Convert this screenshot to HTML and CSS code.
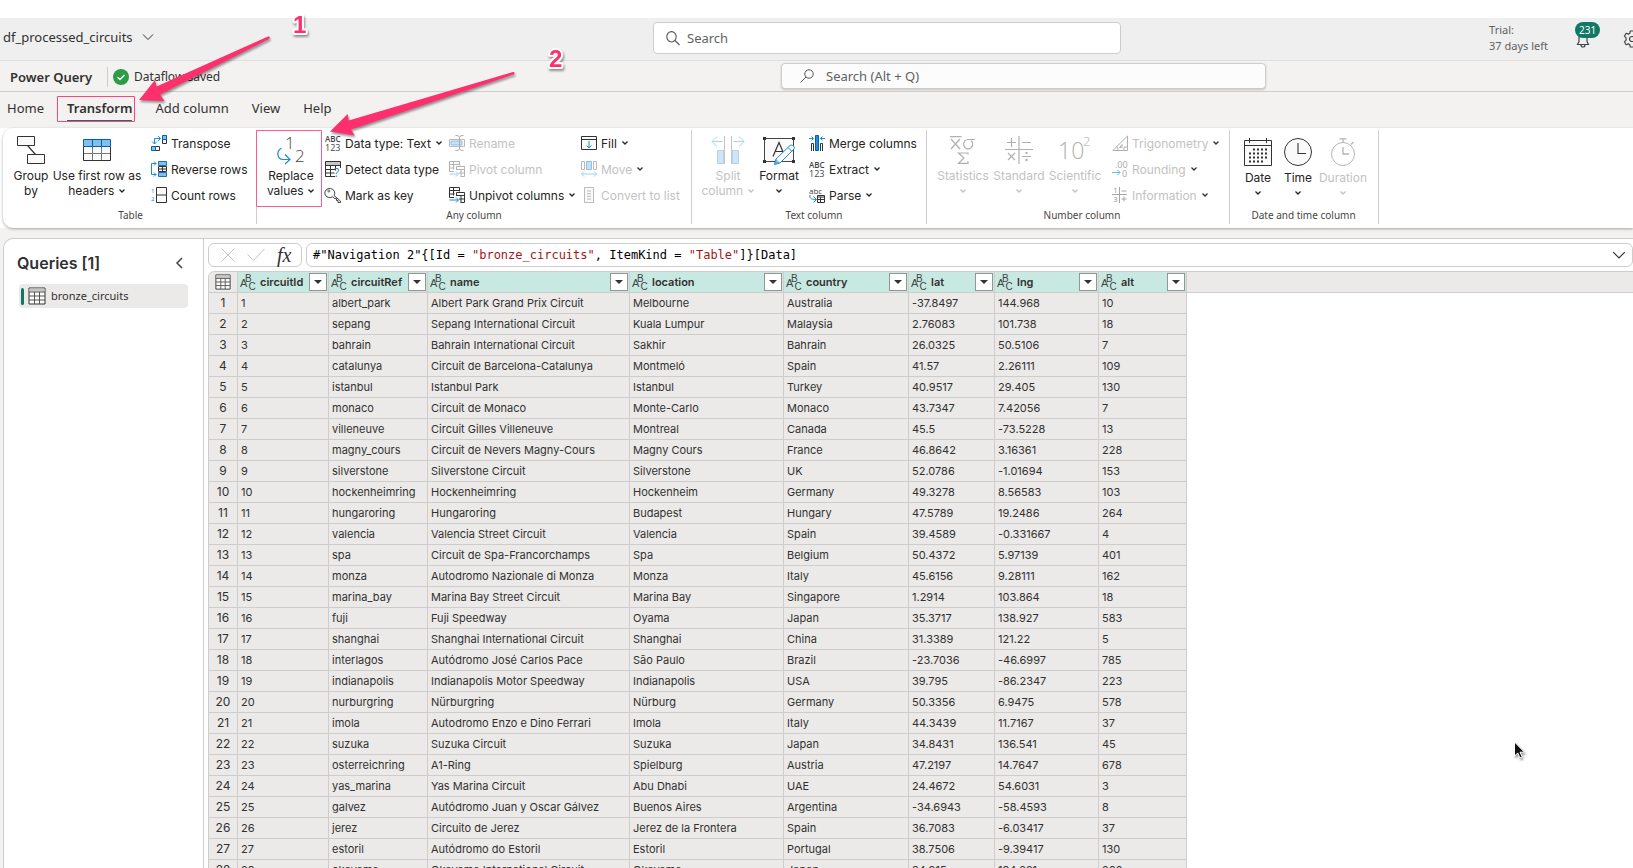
FILE: index.html
```html
<!DOCTYPE html>
<html lang="en">
<head>
<meta charset="utf-8">
<title>df_processed_circuits - Power Query</title>
<link rel="stylesheet" href="styles.css">
</head>
<body>
<svg class="sprite" aria-hidden="true">
  <symbol id="chev" viewBox="0 0 8 8"><path d="M1.500 2.500 4 5l2.500-2.500" fill="none" stroke="currentColor" stroke-width="1.300"/></symbol>
  <symbol id="chev-lg" viewBox="0 0 12 12"><path d="M1 3.500 6 8.500l5-5" fill="none" stroke="currentColor" stroke-width="1"/></symbol>
  <symbol id="abc" viewBox="0 0 16 16"><g fill="#444" font-family="Liberation Sans, sans-serif" font-weight="400"><text x="0" y="13" font-size="11">A</text><text x="5" y="8" font-size="10">B</text><text x="8.500" y="16" font-size="10">C</text></g></symbol>
  <symbol id="abc123" viewBox="0 0 16 16"><g fill="#444" font-family="Open Sans, sans-serif"><text x="0" y="6.500" font-size="8" font-weight="600">ABC</text><text x="0" y="16" font-size="9">123</text></g></symbol>
  <symbol id="grid" viewBox="0 0 18 18"><path d="M1 1h16v16H1z" fill="#fafafa" stroke="#333"/><path d="M1.500 1.500h15v3h-15z" fill="#c8c6c4"/><path d="M1 5h16M1 9h16M1 13h16M6.500 5v12M11.500 5v12" fill="none" stroke="#555"/></symbol>
</svg>

<div class="app">
  <header class="topbar">
    <button class="title" type="button">df_processed_circuits <svg class="i12"><use href="#chev-lg"/></svg></button>
    <label class="search search--global">
      <svg class="i14" viewBox="0 0 14 14"><g fill="none" stroke="#555" stroke-width="1.100"><ellipse cx="5.500" cy="5.800" rx="4.700" ry="5.200"/><path d="M9 9.500 13.500 14"/></g></svg>
      <input type="search" placeholder="Search" aria-label="Search">
    </label>
    <div class="account">
      <p class="trial">Trial:<br>37 days left</p>
      <button class="bell" type="button" aria-label="Notifications">
        <svg viewBox="0 0 16 20" width="16" height="20"><path d="M2.500 15.500h11l-1.500-3V7a4 4 0 0 0-8 0v5.500zM6 16a2 2 0 0 0 4 0" fill="none" stroke="#444" stroke-width="1.200"/></svg>
        <span class="badge">231</span>
      </button>
      <button class="gear" type="button" aria-label="Settings"><svg viewBox="0 0 18 18" width="18" height="18"><g fill="none" stroke="#444" stroke-width="1.200"><path d="M7.300 1h3.400l.5 2.300 1.500.8 2.200-.8 1.700 2.900-1.700 1.700v2.200l1.700 1.700-1.700 2.900-2.200-.8-1.500.8-.5 2.300H7.300l-.5-2.300-1.500-.8-2.200.8-1.700-2.900 1.700-1.700V7.900L1.400 6.200l1.700-2.900 2.200.8 1.500-.8z" stroke-linejoin="round"/><circle cx="9" cy="9" r="2.500"/></g></svg></button>
    </div>
  </header>

  <div class="subbar">
    <div class="status">
      <strong class="product">Power Query</strong>
      <svg class="i16" viewBox="0 0 16 16"><circle cx="8" cy="8" r="8" fill="#2e9b47"/><path d="M4.500 8.200 7 10.500l4.500-4.500" fill="none" stroke="#fff" stroke-width="1.300"/></svg>
      <span>Dataflow saved</span>
    </div>
    <label class="search search--commands">
      <svg class="i14" viewBox="0 0 14 14"><g fill="none" stroke="#555" stroke-width="1"><circle cx="9" cy="5" r="4.200"/><path d="M6 8 .5 13.500"/></g></svg>
      <input type="search" placeholder="Search (Alt + Q)" aria-label="Search commands">
    </label>
  </div>

  <nav class="tabs">
    <button type="button">Home</button>
    <button type="button" class="active">Transform</button>
    <button type="button">Add column</button>
    <button type="button">View</button>
    <button type="button">Help</button>
  </nav>

  <section class="ribbon">
    <div class="group group--table">
      <div class="tools">
        <button type="button" class="big w36">
          <svg viewBox="0 0 28 28"><g fill="#fafafa" stroke="#333"><path d="M10.500 9.500 18.500 18.500" stroke-width="1.200"/><path d="M.5.500h17v9H.5zM10.500 18.500h17v9h-17z"/></g></svg>
          <span>Group<br>by</span></button>
        <button type="button" class="big w96">
          <svg viewBox="0 0 28 28"><path d="M.5 3.500h27v21H.5z" fill="#fafafa"/><path d="M.5 3.500h27v7H.5z" fill="#83beec"/><path d="M.5 10.500h27M9.500 3.500v7M18.500 3.500v7" stroke="#0063b1" fill="none"/><path d="M1 17.500h26M9.500 11v13M18.500 11v13" stroke="#777" fill="none"/><path d="M.5 10.500v14h27v-14" fill="none" stroke="#333"/><path d="M.5 10.500v-7h27v7" fill="none" stroke="#0063b1"/></svg>
          <span>Use first row as<br>headers <svg class="i8"><use href="#chev"/></svg></span></button>
        <div class="stack">
          <button type="button"><svg viewBox="0 0 16 16"><g fill="#fafafa" stroke="#333"><path d="M11.500 4.500h4v4h-4zM4.500 11.500h4v4h-4z"/><path d="M11.500.5h4v4h-4zM.5 11.500h4v4h-4z" fill="#83beec" stroke="#0063b1"/></g><path d="M9.500 3.500H3.500V9M7 1l2.500 2.500L7 6M1 6.500 3.500 9 6 6.500" fill="none" stroke="#1e8bcd"/></svg>Transpose</button>
          <button type="button"><svg viewBox="0 0 16 16"><path d="M7.500 5.500h8v5h-8zM7.500 8h8M11.500 5.500v5" fill="#fafafa" stroke="#333"/><path d="M7.500.5h8v4h-8zM7.500 11.500h8v4h-8z" fill="#83beec" stroke="#1e6fb5"/><path d="M5 2.500H.5v11H5M3 .5l2 2-2 2M3 11.500l2 2-2 2" fill="none" stroke="#1e8bcd"/></svg>Reverse rows</button>
          <button type="button"><svg viewBox="0 0 16 16"><path d="M5.500.5h10v15h-10zM5.500 8h10" fill="#fafafa" stroke="#333"/><g fill="#1e8bcd" font-family="Open Sans, sans-serif" font-size="6"><text x="0" y="5.500">1</text><text x="0" y="14">2</text></g></svg>Count rows</button>
        </div>
      </div>
      <h2>Table</h2>
    </div>

    <div class="group group--any">
      <div class="tools">
        <button type="button" class="big w68">
          <svg viewBox="0 0 28 28"><g fill="#444" font-family="Open Sans, sans-serif" font-size="17" font-weight="300"><text x="8" y="13">1</text><text x="18" y="26">2</text></g><path d="M4.500 12C-1 15 0 23.500 6 23.500h6.500M8 18.500l5 5-5 4.500" fill="none" stroke="#1e8bcd" stroke-width="1.200"/></svg>
          <span>Replace<br>values <svg class="i8"><use href="#chev"/></svg></span></button>
        <div class="stack w124">
          <button type="button"><svg><use href="#abc123"/></svg>Data type: Text <svg class="i8"><use href="#chev"/></svg></button>
          <button type="button"><svg viewBox="0 0 16 16"><path d="M.5 1h15v4H.5z" fill="#c8c6c4"/><path d="M10 15.500H.5V.5h15V7M.5 4.500h15M.5 8.500H10M.5 12h9M5.500 4.500v11M10.500 4.500v5" fill="none" stroke="#333"/><text x="9" y="15.500" font-family="Open Sans, sans-serif" font-size="12" fill="#1e8bcd">?</text></svg>Detect data type</button>
          <button type="button"><svg viewBox="0 0 16 16"><path d="M9 8.500 15.500 14v1.500H13v-2h-1.500v-2H9.500L7.800 9.700A5 4.600 0 1 1 9 8.500z" fill="#fafafa" stroke="#444"/><circle cx="3.800" cy="4" r="1" fill="none" stroke="#444" stroke-width=".8"/></svg>Mark as key</button>
        </div>
        <div class="stack w132">
          <button type="button" disabled><svg viewBox="0 0 16 16"><path d="M.5 4.500h15v7H.5z" fill="#fafafa" stroke="#bbb"/><path d="M2 6h11v4H2z" fill="#c7e0f4" stroke="#8fc1e8"/><path d="M6.500.5c2 0 4 .5 4 2v11c0 1.500-2 2-4 2M14.500.5c-2 0-4 .5-4 2v11c0 1.500 2 2 4 2" fill="none" stroke="#aaa"/></svg>Rename</button>
          <button type="button" disabled><svg viewBox="0 0 16 16"><path d="M5 10.500H.5V.5h10v4M.5 3.500h10M.5 7h5M4.500.5v8M7.500 9V5.500h8v10h-4M7.500 8.500h8M12 8.500v7M10 12h5" fill="none" stroke="#b3b3b3"/><path d="M.5 13h9M7 10.500 9.500 13 7 15.500" fill="none" stroke="#9fd0f0"/></svg>Pivot column</button>
          <button type="button"><svg viewBox="0 0 16 16"><path d="M5 10.500H.5V.5h10v4M.5 3.500h10M.5 7h5M4.500.5v8M7.500 9V5.500h8v10h-4M7.500 8.500h8M12 8.500v7M10 12h5" fill="none" stroke="#333"/><path d="M.5 13h9M7 10.500 9.500 13 7 15.500" fill="none" stroke="#1e8bcd"/></svg>Unpivot columns <svg class="i8"><use href="#chev"/></svg></button>
        </div>
        <div class="stack">
          <button type="button"><svg viewBox="0 0 16 16"><path d="M.5 1.500h15v13H.5zM.5 4.500h15" fill="#fafafa" stroke="#333"/><path d="M8 6v7M5.500 10.500 8 13l2.500-2.500" fill="none" stroke="#1e8bcd"/></svg>Fill <svg class="i8"><use href="#chev"/></svg></button>
          <button type="button" disabled><svg viewBox="0 0 16 16"><path d="M.5.500h3v8h-3zM12.500.500h3v8h-3z" fill="none" stroke="#bbb"/><path d="M5.500.500h5v8h-5z" fill="#c7e0f4" stroke="#8fc1e8"/><path d="M.5 13h15M3 10.500.5 13 3 15.500M13 10.500 15.500 13 13 15.500" fill="none" stroke="#9fd0f0"/></svg>Move <svg class="i8 dark"><use href="#chev"/></svg></button>
          <button type="button" disabled><svg viewBox="0 0 16 16"><path d="M3.500.5h9v15h-9zM6 4h4M6 6.700h4M6 9.300h4M6 12h4" fill="#fafafa" stroke="#bbb"/></svg>Convert to list</button>
        </div>
      </div>
      <h2>Any column</h2>
    </div>

    <div class="group group--text">
      <div class="tools">
        <button type="button" class="big w52" disabled>
          <svg class="wide" viewBox="0 0 32 28"><path d="M12.500 0v28M19.500 0v28" stroke="#c4c4c4"/><path d="M5.500 14.500h6v13h-6zM20.500 14.500h6v13h-6z" fill="#cfe4f6" stroke="#b0d3ee"/><path d="M10.500 5.500H.5M5 .5l-5 5 5 5M21.500 5.500h10M27 .5l5 5-5 5" fill="none" stroke="#a5d3f0"/></svg>
          <span>Split<br>column <svg class="i8"><use href="#chev"/></svg></span></button>
        <button type="button" class="big w50">
          <svg class="wide" viewBox="0 0 32 28"><path d="M1.500 2.500h29v23h-29z" fill="#fafafa" stroke="#444"/><path d="M0 1h3v3H0zM29 1h3v3h-3zM0 24h3v3H0zM29 24h3v3h-3z" fill="#333"/><path d="M10 20.500 16 6.500l6 14M12 15.500h8" fill="none" stroke="#333" stroke-width="1.200"/><path d="M11.500 28.500 13 23 27 9.500c2-1.500 5.500 1.500 4 3.500L17 27z" fill="#fafafa" stroke="#1e8bcd"/><path d="M11.500 28.500 13 23l4 4z" fill="#1e8bcd" opacity=".6"/><path d="M25 11.500l4 4" stroke="#1e8bcd"/></svg>
          <span>Format<br><svg class="i8"><use href="#chev"/></svg></span></button>
        <div class="stack">
          <button type="button"><svg viewBox="0 0 16 16"><path d="M6.500.5h3v15h-3z" fill="#2b88d8" stroke="#0063b1"/><path d="M2.500 16V8.500h2V16M13.500 16V8.500h-2V16" fill="none" stroke="#333"/><path d="M0 3.500h4.500M2.500 1.500l2 2-2 2M16 3.500h-4.500M13.500 1.500l-2 2 2 2" fill="none" stroke="#1e8bcd"/></svg>Merge columns</button>
          <button type="button"><svg><use href="#abc123"/></svg>Extract <svg class="i8"><use href="#chev"/></svg></button>
          <button type="button"><svg viewBox="0 0 16 16"><text x="0" y="6.500" font-family="Open Sans, sans-serif" font-size="8" fill="#444">abc</text><path d="M1 8c-1 3 1 4.500 6 4.500M4.500 9.500l3 3-3 3" fill="none" stroke="#1e8bcd"/><path d="M8.500 8.500h7v7h-7zM8.500 10h7M9 12.500h7M11.500 10v5" fill="none" stroke="#333"/></svg>Parse <svg class="i8"><use href="#chev"/></svg></button>
        </div>
      </div>
      <h2>Text column</h2>
    </div>

    <div class="group group--number">
      <div class="tools">
        <button type="button" class="big w56" disabled>
          <svg viewBox="0 0 28 28"><g fill="none" stroke="#b0b0b0" stroke-width="1.200"><path d="M1 .6h11.500M2 3l9 10M11 3 2 13M26 3.500h-6.500a4.500 4.700 0 1 0 2.500 1M19 16.500v2M19 17H9.500l5.500 5-5.500 5.300H19v-2"/></g></svg>
          <span>Statistics<br><svg class="i8"><use href="#chev"/></svg></span></button>
        <button type="button" class="big w56" disabled>
          <svg viewBox="0 0 28 28"><g fill="none" stroke="#b0b0b0" stroke-width="1.200"><path d="M14 0v28M0 13.500h28M2 6.500h9M6.500 2v9M17 6.500h9M3 17l7 7M10 17l-7 7M17 20.500h9"/></g><circle cx="21.500" cy="17" r="1.200" fill="#b0b0b0"/><circle cx="21.500" cy="24" r="1.200" fill="#b0b0b0"/></svg>
          <span>Standard<br><svg class="i8"><use href="#chev"/></svg></span></button>
        <button type="button" class="big w56" disabled>
          <svg class="wide" viewBox="0 0 32 28"><g fill="#b0b0b0" font-family="Open Sans, sans-serif" font-weight="300"><text x="-1" y="23" font-size="23">10</text><text x="24" y="10" font-size="13">2</text></g></svg>
          <span>Scientific<br><svg class="i8"><use href="#chev"/></svg></span></button>
        <div class="stack">
          <button type="button" disabled><svg viewBox="0 0 16 16"><path d="M.8 15.500 15.500 1v14.500zM6 15c0-2-.5-3-2-3.500M15.500 12H12v3.500M7.500 12.500h2.500v-3z" fill="none" stroke="#b0b0b0"/></svg>Trigonometry <svg class="i8 dark"><use href="#chev"/></svg></button>
          <button type="button" disabled><svg viewBox="0 0 16 16"><g font-family="Open Sans, sans-serif" font-size="9" fill="#a6a6a6"><text x="3" y="7">.00</text><text x="10" y="16">0</text></g><path d="M0 11.500h8M5.500 9 8 11.500 5.500 14" fill="none" stroke="#6cb8ea"/></svg>Rounding <svg class="i8 dark"><use href="#chev"/></svg></button>
          <button type="button" disabled><svg viewBox="0 0 16 16"><path d="M7.500 0v16M0 7.500h15M9.500 4h5M9.500 12h5M12 9.500v5" fill="none" stroke="#a6a6a6"/><g font-family="Open Sans, sans-serif" font-size="7" fill="#888"><text x="1.500" y="6">1</text><text x="1.500" y="15">3</text></g></svg>Information <svg class="i8 dark"><use href="#chev"/></svg></button>
        </div>
      </div>
      <h2>Number column</h2>
    </div>

    <div class="group group--date">
      <div class="tools">
        <button type="button" class="big low w42">
          <svg viewBox="0 0 28 28"><path d="M.5 2.500h27v25H.5zM.5 7.500h27M5.500 0v5M22.500 0v5" fill="#fafafa" stroke="#333"/><path d="M9 11.500h14M5 15.500h18M5 19.500h18M5 23.500h14" stroke="#333" stroke-width="2" stroke-dasharray="2 2"/></svg>
          <span>Date<br><svg class="i8"><use href="#chev"/></svg></span></button>
        <button type="button" class="big low w38">
          <svg viewBox="0 0 28 28"><circle cx="14" cy="14" r="13.500" fill="#fafafa" stroke="#333"/><path d="M14 5v10.500h8" fill="none" stroke="#333" stroke-width="1.100"/></svg>
          <span>Time<br><svg class="i8"><use href="#chev"/></svg></span></button>
        <button type="button" class="big low w52" disabled>
          <svg viewBox="0 0 28 28"><g fill="none" stroke="#b5b5b5"><circle cx="14" cy="16" r="11.500"/><path d="M10.500.8h7M14 1v4M22 6.500 24.500 4M14 9v7h6" stroke-width="1.300"/></g></svg>
          <span>Duration<br><svg class="i8"><use href="#chev"/></svg></span></button>
      </div>
      <h2>Date and time column</h2>
    </div>
  </section>

  <div class="workspace">
    <aside class="queries">
      <div class="queries-head">
        <h1>Queries [1]</h1>
        <button type="button" aria-label="Collapse"><svg width="8" height="12" viewBox="0 0 8 12"><path d="M7 1 2 6l5 5" fill="none" stroke="#444" stroke-width="1.500"/></svg></button>
      </div>
      <button type="button" class="query"><svg width="18" height="18"><use href="#grid"/></svg>bronze_circuits</button>
    </aside>

    <main class="main">
      <div class="formula">
        <div class="fx">
          <svg width="14" height="14" viewBox="0 0 14 14"><path d="M.5.5l13 13M13.500.5l-13 13" stroke="#c2c2c2"/></svg>
          <svg width="18" height="14" viewBox="0 0 18 14"><path d="M.5 6.500 6.500 12.500 17.500 1" fill="none" stroke="#c2c2c2"/></svg>
          <em>fx</em>
        </div>
        <div class="expr">
          <code>#"Navigation 2"{[Id = <b>"bronze_circuits"</b>, ItemKind = <b>"Table"</b>]}[Data]</code>
          <button type="button" aria-label="Expand formula"><svg class="i14"><use href="#chev-lg"/></svg></button>
        </div>
      </div>

      <div class="sheet">
        <table>
          <colgroup><col class="c0"><col class="c1"><col class="c2"><col class="c3"><col class="c4"><col class="c5"><col class="c6"><col class="c7"><col class="c8"></colgroup>
          <thead>
            <tr>
              <td class="corner"><svg width="16" height="16"><use href="#grid"/></svg></td>
              <th scope="col"><div class="col"><svg class="i16"><use href="#abc"/></svg><span>circuitId</span><button type="button" aria-label="Filter circuitId"></button></div></th>
              <th scope="col"><div class="col"><svg class="i16"><use href="#abc"/></svg><span>circuitRef</span><button type="button" aria-label="Filter circuitRef"></button></div></th>
              <th scope="col"><div class="col"><svg class="i16"><use href="#abc"/></svg><span>name</span><button type="button" aria-label="Filter name"></button></div></th>
              <th scope="col"><div class="col"><svg class="i16"><use href="#abc"/></svg><span>location</span><button type="button" aria-label="Filter location"></button></div></th>
              <th scope="col"><div class="col"><svg class="i16"><use href="#abc"/></svg><span>country</span><button type="button" aria-label="Filter country"></button></div></th>
              <th scope="col"><div class="col"><svg class="i16"><use href="#abc"/></svg><span>lat</span><button type="button" aria-label="Filter lat"></button></div></th>
              <th scope="col"><div class="col"><svg class="i16"><use href="#abc"/></svg><span>lng</span><button type="button" aria-label="Filter lng"></button></div></th>
              <th scope="col"><div class="col"><svg class="i16"><use href="#abc"/></svg><span>alt</span><button type="button" aria-label="Filter alt"></button></div></th>
            </tr>
          </thead>
          <tbody>
            <tr><th>1<td>1<td>albert_park<td>Albert Park Grand Prix Circuit<td>Melbourne<td>Australia<td>-37.8497<td>144.968<td>10
            <tr><th>2<td>2<td>sepang<td>Sepang International Circuit<td>Kuala Lumpur<td>Malaysia<td>2.76083<td>101.738<td>18
            <tr><th>3<td>3<td>bahrain<td>Bahrain International Circuit<td>Sakhir<td>Bahrain<td>26.0325<td>50.5106<td>7
            <tr><th>4<td>4<td>catalunya<td>Circuit de Barcelona-Catalunya<td>Montmeló<td>Spain<td>41.57<td>2.26111<td>109
            <tr><th>5<td>5<td>istanbul<td>Istanbul Park<td>Istanbul<td>Turkey<td>40.9517<td>29.405<td>130
            <tr><th>6<td>6<td>monaco<td>Circuit de Monaco<td>Monte-Carlo<td>Monaco<td>43.7347<td>7.42056<td>7
            <tr><th>7<td>7<td>villeneuve<td>Circuit Gilles Villeneuve<td>Montreal<td>Canada<td>45.5<td>-73.5228<td>13
            <tr><th>8<td>8<td>magny_cours<td>Circuit de Nevers Magny-Cours<td>Magny Cours<td>France<td>46.8642<td>3.16361<td>228
            <tr><th>9<td>9<td>silverstone<td>Silverstone Circuit<td>Silverstone<td>UK<td>52.0786<td>-1.01694<td>153
            <tr><th>10<td>10<td>hockenheimring<td>Hockenheimring<td>Hockenheim<td>Germany<td>49.3278<td>8.56583<td>103
            <tr><th>11<td>11<td>hungaroring<td>Hungaroring<td>Budapest<td>Hungary<td>47.5789<td>19.2486<td>264
            <tr><th>12<td>12<td>valencia<td>Valencia Street Circuit<td>Valencia<td>Spain<td>39.4589<td>-0.331667<td>4
            <tr><th>13<td>13<td>spa<td>Circuit de Spa-Francorchamps<td>Spa<td>Belgium<td>50.4372<td>5.97139<td>401
            <tr><th>14<td>14<td>monza<td>Autodromo Nazionale di Monza<td>Monza<td>Italy<td>45.6156<td>9.28111<td>162
            <tr><th>15<td>15<td>marina_bay<td>Marina Bay Street Circuit<td>Marina Bay<td>Singapore<td>1.2914<td>103.864<td>18
            <tr><th>16<td>16<td>fuji<td>Fuji Speedway<td>Oyama<td>Japan<td>35.3717<td>138.927<td>583
            <tr><th>17<td>17<td>shanghai<td>Shanghai International Circuit<td>Shanghai<td>China<td>31.3389<td>121.22<td>5
            <tr><th>18<td>18<td>interlagos<td>Autódromo José Carlos Pace<td>São Paulo<td>Brazil<td>-23.7036<td>-46.6997<td>785
            <tr><th>19<td>19<td>indianapolis<td>Indianapolis Motor Speedway<td>Indianapolis<td>USA<td>39.795<td>-86.2347<td>223
            <tr><th>20<td>20<td>nurburgring<td>Nürburgring<td>Nürburg<td>Germany<td>50.3356<td>6.9475<td>578
            <tr><th>21<td>21<td>imola<td>Autodromo Enzo e Dino Ferrari<td>Imola<td>Italy<td>44.3439<td>11.7167<td>37
            <tr><th>22<td>22<td>suzuka<td>Suzuka Circuit<td>Suzuka<td>Japan<td>34.8431<td>136.541<td>45
            <tr><th>23<td>23<td>osterreichring<td>A1-Ring<td>Spielburg<td>Austria<td>47.2197<td>14.7647<td>678
            <tr><th>24<td>24<td>yas_marina<td>Yas Marina Circuit<td>Abu Dhabi<td>UAE<td>24.4672<td>54.6031<td>3
            <tr><th>25<td>25<td>galvez<td>Autódromo Juan y Oscar Gálvez<td>Buenos Aires<td>Argentina<td>-34.6943<td>-58.4593<td>8
            <tr><th>26<td>26<td>jerez<td>Circuito de Jerez<td>Jerez de la Frontera<td>Spain<td>36.7083<td>-6.03417<td>37
            <tr><th>27<td>27<td>estoril<td>Autódromo do Estoril<td>Estoril<td>Portugal<td>38.7506<td>-9.39417<td>130
            <tr><th>28<td>28<td>okayama<td>Okayama International Circuit<td>Okayama<td>Japan<td>34.915<td>134.221<td>266
          </tbody>
        </table>
        <div class="filler"></div>
      </div>
    </main>
  </div>
</div>

<svg class="notes" width="1633" height="868" viewBox="0 0 1633 868" aria-hidden="true">
  <path d="M57.500 96.500h77v25h-77z" fill="none" stroke="#f9487f"/>
  <path d="M256.500 130.500h65v76h-65z" fill="none" stroke="#fb5c8d"/>
  <g class="drop" fill="#ff2f6d">
    <path d="M139 100 155 80l1.500 6.500L268 36.500c2-.5 2.500 1.500 1 2.500L160 94.500l4.500 6.500z"/>
    <path d="M330 131.500 347.700 114l1 6.500L513 72c2 0 2 2 .5 2.500L351 129.500l3.700 6z"/>
    <g font-family="Liberation Sans, sans-serif" font-size="24" font-weight="700" stroke="#fff" stroke-width="4" stroke-linejoin="round" paint-order="stroke">
      <text x="293" y="33">1</text>
      <text x="549" y="67">2</text>
    </g>
  </g>
  <path class="drop" d="M1514.500 742v14l3.300-3 2.200 5 2.200-1-2.200-4.800h4.500z" fill="#111" stroke="#fff"/>
</svg>
</body>
</html>
```
FILE: styles.css
```css
* { box-sizing: border-box; }

:root {
  --ui: "Noto Sans", "Open Sans", sans-serif;
  --data: Inter, "Liberation Sans", sans-serif;
  --line: #cfcdcb;
  --chrome: #f3f2f1;
  --cell: #ebeae9;
  --accent: #117865;
}

body {
  margin: 0;
  background: #fff;
  color: #323130;
  font: 13px/16px var(--ui);
  overflow: hidden;
}

button {
  border: 0;
  padding: 0;
  margin: 0;
  background: none;
  color: inherit;
  font: inherit;
}

svg { flex: none; display: block; overflow: visible; }
.sprite { display: none; }
.i8 { width: 8px; height: 8px; }
.i12 { width: 12px; height: 12px; }
.i14 { width: 14px; height: 14px; }
.i16 { width: 16px; height: 16px; }

.app {
  display: flex;
  flex-direction: column;
  height: 100vh;
  padding-top: 18px;
  overflow: hidden;
}

/* Top bars */
.topbar,
.subbar {
  display: grid;
  align-items: center;
  flex: none;
}
.topbar {
  grid-template-columns: 653px minmax(0, 468px) 1fr;
  height: 43px;
  background: #efefef;
  border-bottom: 1px solid #dedede;
}
.subbar {
  grid-template-columns: 781px minmax(0, 485px) 1fr;
  height: 31px;
  background: var(--chrome);
  border-bottom: 1px solid var(--line);
  font-size: 12px;
}
.title {
  display: flex;
  align-items: center;
  gap: 9px;
  padding: 0 0 4px 3px;
}
.search {
  display: flex;
  align-items: center;
  border: 1px solid var(--line);
  border-radius: 4px;
  background: #fff;
}
.search input {
  flex: 1;
  border: 0;
  padding: 0;
  background: none;
  font: 13px/16px var(--ui);
}
.search input::placeholder { color: #616161; opacity: 1; }
.search--global { height: 32px; padding-left: 12px; gap: 7px; margin-bottom: 3px; }
.search--commands {
  height: 26px;
  padding-left: 18px;
  gap: 12px;
  background: #fcfcfc;
  box-shadow: 0 1px 2px #0003;
}
.account {
  display: flex;
  align-items: center;
  justify-content: flex-end;
  margin-right: -8px;
  color: #616161;
}
.trial { margin: 0 27px 3px 0; font-size: 11px; }
.bell { position: relative; margin-right: 32px; }
.badge {
  position: absolute;
  left: 0;
  top: -7px;
  padding: 0 4px;
  border-radius: 8px;
  background: var(--accent);
  color: #fff;
  font-size: 10px;
  line-height: 16px;
}
.status { display: flex; align-items: center; padding-top: 2px; }
.product {
  margin-right: 5px;
  padding: 2px 15px 2px 10px;
  border-right: 1px solid var(--line);
  font-size: 13px;
  font-weight: 600;
}
.status span { margin-left: 5px; }

/* Tabs */
.tabs {
  display: flex;
  flex: none;
  gap: 23px;
  height: 36px;
  padding-left: 7px;
  background: var(--chrome);
}
.tabs button { height: 30px; padding-top: 4px; border-bottom: 2px solid transparent; }
.tabs .active { border-color: var(--accent); font-weight: 600; }

/* Ribbon */
.ribbon {
  display: flex;
  flex: none;
  height: 100px;
  margin-left: 3px;
  padding: 2px 0 4px;
  background: #fff;
  border-radius: 10px 0 0 10px;
  box-shadow: 0 1px 3px #0005;
  font: 12px/15px var(--data);
  color: #252423;
  z-index: 1;
}
.group {
  display: flex;
  flex-direction: column;
  border-right: 1px solid var(--line);
}
.tools { display: flex; height: 78px; }
.group--table { width: 254px; padding-left: 10px; }
.group--any { width: 435px; }
.group--text { width: 235px; padding-left: 10px; }
.group--number { width: 303px; padding-left: 8px; }
.group--date { width: 149px; padding-left: 7px; }
.group h2 {
  margin: 0;
  text-align: center;
  font: 10px/14px var(--ui);
  color: #484644;
}
.group--table h2,
.group--date h2 { margin-left: -8px; }
.big {
  display: flex;
  flex-direction: column;
  align-items: center;
  gap: 4px;
  padding-top: 6px;
  white-space: nowrap;
}
.big > svg { width: 28px; height: 28px; }
.big > .wide { width: 32px; }
.big span svg { display: inline-block; }
.low { padding-top: 8px; }
.w36 { width: 36px; }
.w38 { width: 38px; }
.w42 { width: 42px; }
.w50 { width: 50px; }
.w52 { width: 52px; }
.w56 { width: 56px; }
.w68 { width: 68px; }
.w96 { width: 96px; }
.w124 { width: 124px; }
.w132 { width: 132px; }
.stack { margin-left: 6px; }
.group--any .stack { margin-left: 0; }
.group--text .stack { margin-left: 5px; }
.group--number .stack { margin-left: 9px; }
.stack button {
  display: flex;
  align-items: center;
  gap: 4px;
  height: 26px;
  white-space: nowrap;
}
.stack button > svg:first-child { width: 16px; height: 16px; }
button:disabled { color: #c3c2c1; }
.dark { color: #323130; }

/* Workspace */
.workspace {
  display: flex;
  flex: 1;
  min-height: 0;
  padding: 10px 0 0 3px;
  background: var(--chrome);
}
.queries {
  width: 201px;
  flex: none;
  padding: 15px 15px 0 13px;
  border: 1px solid var(--line);
  border-bottom: 0;
  border-radius: 10px 0 0 0;
  background: #fff;
}
.queries-head {
  display: flex;
  align-items: center;
  justify-content: space-between;
  padding-right: 5px;
}
.queries h1 { margin: 0; font: 600 16px/18px var(--data); }
.query {
  display: flex;
  align-items: center;
  gap: 5px;
  width: 169px;
  height: 24px;
  margin: 12px 0 0 2px;
  padding-left: 2px;
  border-radius: 4px;
  background: var(--cell);
  font-size: 11px;
}
.query::before {
  content: "";
  width: 3px;
  height: 17px;
  border-radius: 2px;
  background: var(--accent);
  margin-right: -1px;
}
.main {
  flex: 1;
  min-width: 0;
  padding: 4px 0 0 4px;
  border-top: 1px solid var(--line);
  background: #fff;
}
.formula { display: flex; gap: 4px; margin-bottom: 4px; }
.fx,
.expr {
  display: flex;
  align-items: center;
  height: 24px;
  border: 1px solid var(--line);
  border-radius: 6px;
}
.fx { width: 94px; gap: 12px; padding-left: 12px; }
.fx em { font: italic 20px/20px "Liberation Serif", serif; }
.expr { flex: 1; justify-content: space-between; padding: 0 6px; }
.expr code { font: 12px/16px "DejaVu Sans Mono", monospace; color: #000; }
.expr b { font-weight: 400; color: #a31515; }

.sheet { display: flex; border-left: 1px solid var(--line); border-radius: 6px 0 0 0; }
.filler {
  flex: 1;
  height: 22px;
  background: var(--cell);
  border: solid var(--line);
  border-width: 1px 0;
}
table {
  table-layout: fixed;
  width: 978px;
  flex: none;
  border-spacing: 0;
  font: 11px/20px var(--data);
}
.c0 { width: 29px; }
.c1 { width: 91px; }
.c2 { width: 99px; }
.c3 { width: 202px; }
.c4 { width: 154px; }
.c5 { width: 125px; }
.c6 { width: 86px; }
.c7 { width: 104px; }
.c8 { width: 88px; }
th,
td {
  height: 21px;
  padding: 0 3px;
  border: solid var(--line);
  border-width: 0 1px 1px 0;
  background: var(--cell);
  text-align: left;
  white-space: nowrap;
}
tbody th { font-size: 12px; font-weight: 400; text-align: center; padding: 0; }
thead th,
thead td { height: 22px; border-top-width: 1px; padding: 0 1px 0 2px; }
thead th { background: #c8e9e1; font-weight: 600; }
.corner { padding-left: 6px; border-radius: 6px 0 0 0; }
.col { display: flex; align-items: center; }
.col span { flex: 1; margin-left: 4px; }
.col button {
  display: grid;
  place-items: center;
  width: 18px;
  height: 18px;
  border: 1px solid #979593;
  background: #fff;
}
.col button::after {
  content: "";
  border: solid transparent;
  border-width: 4px 4px 0;
  border-top-color: #333;
}

/* Callouts drawn over the page */
.notes { position: absolute; left: 0; top: 0; z-index: 2; pointer-events: none; }
.drop { filter: drop-shadow(1px 2px 1px #0006); }
```
